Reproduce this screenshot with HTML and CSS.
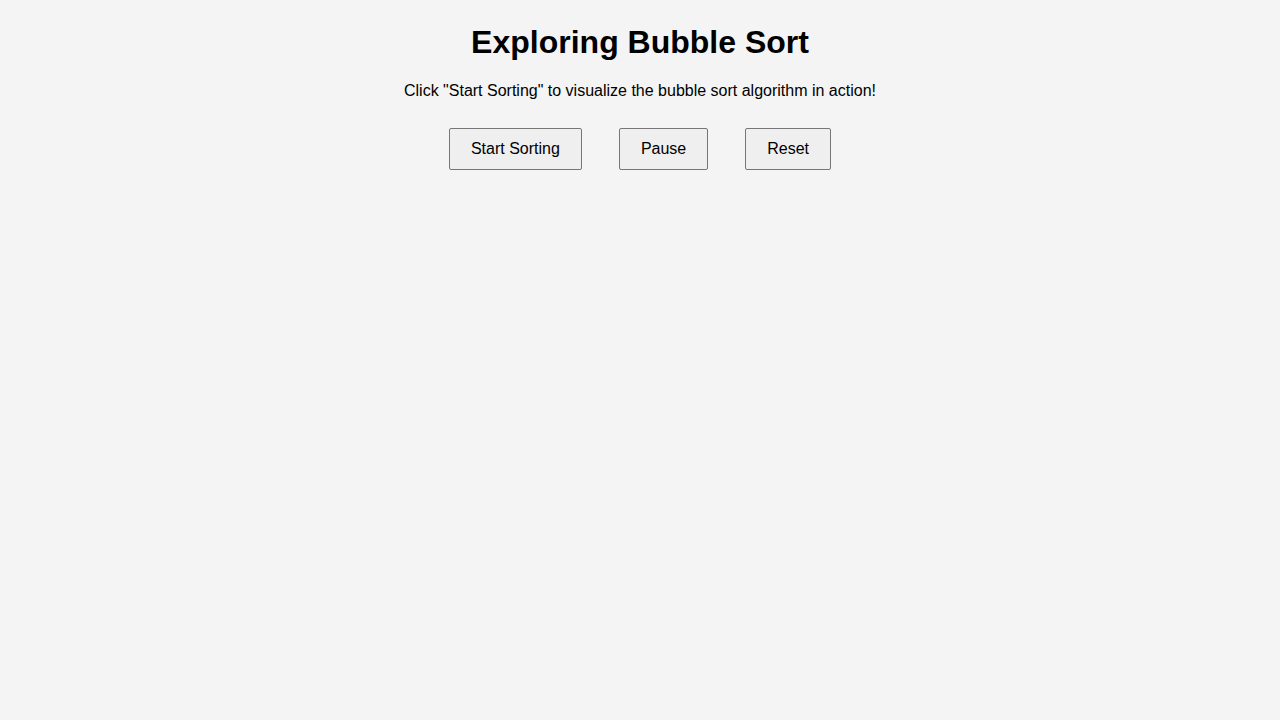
FILE: index.html
```html
<!DOCTYPE html>
<html lang="en">
<head>
<meta charset="utf-8">
<title>Exploring Bubble Sort</title>
<link rel="stylesheet" href="styles.css">
</head>
<body>
<main class="page">
  <h1 class="title">Exploring Bubble Sort</h1>
  <p class="intro">Click "Start Sorting" to visualize the bubble sort algorithm in action!</p>
  <div class="controls">
    <button class="btn">Start Sorting</button>
    <button class="btn">Pause</button>
    <button class="btn">Reset</button>
  </div>
</main>
</body>
</html>
```
FILE: styles.css
```css
html, body {
  background: #f4f4f4;
}
body {
  margin: 0;
  font-family: "Liberation Sans", Arial, sans-serif;
  color: #000;
}
.page {
  text-align: center;
  padding-top: 24px;
}
.title {
  font-size: 32px;
  font-weight: bold;
  margin: 0 0 21px;
}
.intro {
  font-size: 16px;
  margin: 16px 0;
}
.controls {
  display: flex;
  justify-content: center;
  gap: 37px;
  margin-top: 28px;
}
.btn {
  font-family: "Liberation Sans", Arial, sans-serif;
  font-size: 16px;
  color: #000;
  background: #efefef;
  border: 1px solid #767676;
  border-radius: 2px;
  padding: 11px 21px;
  line-height: 18px;
}
```
